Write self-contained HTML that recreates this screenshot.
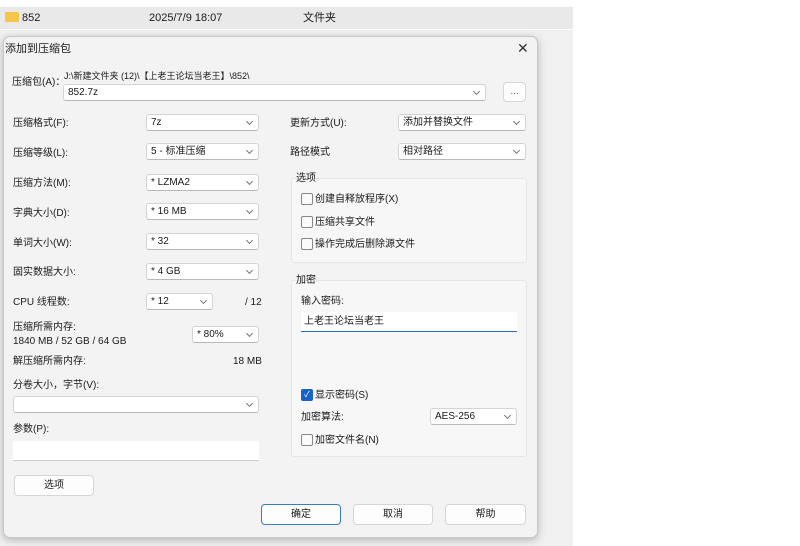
<!DOCTYPE html><html><head><meta charset="utf-8"><style>
*{box-sizing:border-box;margin:0;padding:0}
body{width:800px;height:546px;background:#fff;font-family:"Liberation Sans","Noto Sans CJK SC",sans-serif;font-size:10px;color:#1a1a1a;position:relative;overflow:hidden}
.a{position:absolute;white-space:nowrap;line-height:12px;margin-top:2px}
.cb{position:absolute;background:#fff;border:1px solid #d4d4d4;border-bottom-color:#b8b8b8;border-radius:3px;height:17px;padding:1px 4px;line-height:13px;font-size:10px}
.cb:after{content:"";position:absolute;right:6px;top:4px;width:4px;height:4px;border-right:1px solid #777;border-bottom:1px solid #777;transform:rotate(45deg)}
.btn{position:absolute;background:#fdfdfd;border:1px solid #d6d6d6;border-radius:4px;text-align:center;font-size:10px}
.grp{position:absolute;background:#f7f7f7;border:1px solid #e6e6e6;border-radius:3px}
.chk{position:absolute;width:12px;height:12px;border:1px solid #888;border-radius:2px;background:#fafafa}
</style></head><body>
<div class="a" style="margin:0;left:0;top:7px;width:573px;height:22px;background:#e9e9e9"></div>
<div class="a" style="margin:0;left:5px;top:12px;width:14px;height:10px;background:#f5c64a;border-radius:1px"></div>
<div class="a" style="left:22px;top:10px;font-size:11px">852</div>
<div class="a" style="left:149px;top:10px;font-size:11px">2025/7/9 18:07</div>
<div class="a" style="left:303px;top:10px;font-size:11px">文件夹</div>
<div class="a" style="margin:0;left:0;top:30px;width:573px;height:516px;background:#f0f0f0"></div>
<div class="a" style="margin:0;left:3px;top:36px;width:535px;height:502px;background:#f3f3f3;border:1px solid #c8c8c8;border-radius:7px;box-shadow:0 2px 8px rgba(0,0,0,.25)"></div>
<div class="a" style="left:5px;top:41px;font-size:11px">添加到压缩包</div>
<div class="a" style="left:517px;top:40px;font-size:14px;color:#333">✕</div>
<div class="a" style="left:12px;top:75px">压缩包(A)：</div>
<div class="a" style="left:64px;top:68px;font-size:9px">J:\新建文件夹 (12)\【上老王论坛当老王】\852\</div>
<div class="cb" style="left:63px;top:84px;width:423px">852.7z</div>
<div class="btn" style="left:503px;top:82px;width:23px;height:20px;line-height:17px;color:#666">...</div>
<div class="a" style="left:13px;top:116px">压缩格式(F):</div><div class="cb" style="left:146px;top:114px;width:113px">7z</div>
<div class="a" style="left:13px;top:146px">压缩等级(L):</div><div class="cb" style="left:146px;top:143px;width:113px">5 - 标准压缩</div>
<div class="a" style="left:13px;top:176px">压缩方法(M):</div><div class="cb" style="left:146px;top:174px;width:113px">* LZMA2</div>
<div class="a" style="left:13px;top:206px">字典大小(D):</div><div class="cb" style="left:146px;top:203px;width:113px">* 16 MB</div>
<div class="a" style="left:13px;top:236px">单词大小(W):</div><div class="cb" style="left:146px;top:233px;width:113px">* 32</div>
<div class="a" style="left:13px;top:265px">固实数据大小:</div><div class="cb" style="left:146px;top:263px;width:113px">* 4 GB</div>
<div class="a" style="left:13px;top:295px">CPU 线程数:</div><div class="cb" style="left:146px;top:293px;width:67px">* 12</div>
<div class="a" style="left:245px;top:295px">/ 12</div>
<div class="a" style="left:13px;top:320px">压缩所需内存:</div>
<div class="a" style="left:13px;top:334px">1840 MB / 52 GB / 64 GB</div>
<div class="cb" style="left:192px;top:326px;width:67px">* 80%</div>
<div class="a" style="left:13px;top:354px">解压缩所需内存:</div><div class="a" style="left:233px;top:354px">18 MB</div>
<div class="a" style="left:13px;top:378px">分卷大小，字节(V):</div>
<div class="cb" style="left:13px;top:396px;width:246px"></div>
<div class="a" style="left:13px;top:422px">参数(P):</div>
<div class="a" style="margin:0;left:13px;top:441px;width:246px;height:20px;background:#fff;border-bottom:1px solid #ccc"></div>
<div class="btn" style="left:14px;top:475px;width:80px;height:21px;line-height:19px">选项</div>
<div class="btn" style="left:261px;top:504px;width:80px;height:21px;line-height:19px;border-color:#3a7bc8">确定</div>
<div class="btn" style="left:353px;top:504px;width:80px;height:21px;line-height:19px">取消</div>
<div class="btn" style="left:445px;top:504px;width:81px;height:21px;line-height:19px">帮助</div>
<div class="a" style="left:290px;top:116px">更新方式(U):</div><div class="cb" style="left:398px;top:114px;width:128px">添加并替换文件</div>
<div class="a" style="left:290px;top:145px">路径模式</div><div class="cb" style="left:398px;top:143px;width:128px">相对路径</div>
<div class="grp" style="left:291px;top:178px;width:236px;height:85px"></div>
<div class="a" style="left:296px;top:171px">选项</div>
<div class="chk" style="left:301px;top:193px"></div><div class="a" style="left:315px;top:192px">创建自释放程序(X)</div>
<div class="chk" style="left:301px;top:216px"></div><div class="a" style="left:315px;top:215px">压缩共享文件</div>
<div class="chk" style="left:301px;top:238px"></div><div class="a" style="left:315px;top:237px">操作完成后删除源文件</div>
<div class="grp" style="left:291px;top:280px;width:236px;height:177px"></div>
<div class="a" style="left:296px;top:273px">加密</div>
<div class="a" style="left:301px;top:294px">输入密码:</div>
<div class="a" style="margin:0;left:301px;top:312px;width:216px;height:20px;background:#fff;border-bottom:1px solid #2a6fb8;padding:4px 3px;line-height:12px">上老王论坛当老王</div>
<div class="chk" style="left:301px;top:389px;background:#1a63c6;border-color:#1a63c6;color:#fff;font-size:8px;line-height:10px;text-align:center">✓</div>
<div class="a" style="left:315px;top:388px">显示密码(S)</div>
<div class="a" style="left:301px;top:410px">加密算法:</div><div class="cb" style="left:430px;top:408px;width:87px">AES-256</div>
<div class="chk" style="left:301px;top:434px"></div><div class="a" style="left:315px;top:433px">加密文件名(N)</div>
</body></html>
